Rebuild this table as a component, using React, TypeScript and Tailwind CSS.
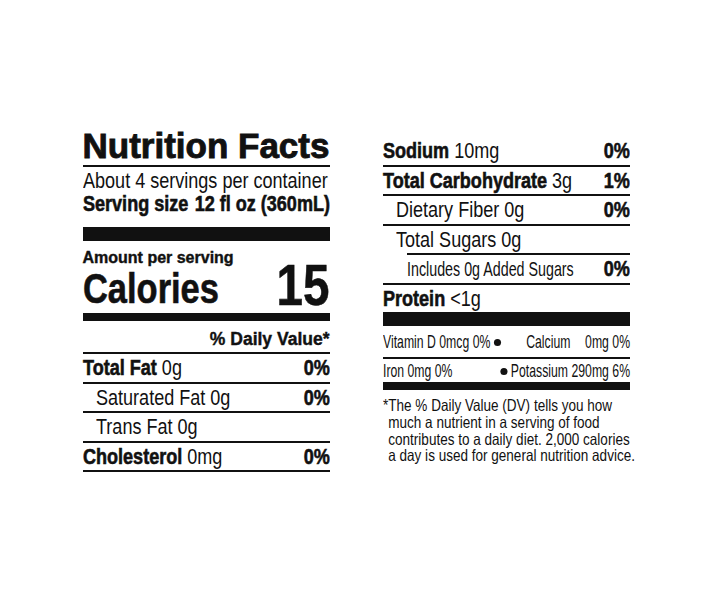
import clsx from 'clsx';

// condensed type = Liberation Sans squeezed horizontally (no narrow face installed)
const sans = "font-['Liberation_Sans',Arial,sans-serif]";
const heavy = '[-webkit-text-stroke:0.6px_#111]';
const squeeze = 'origin-left scale-x-[0.82] w-[301.2px]';

type RowProps = {
  name: string;
  amount?: string;
  dv?: string;
  bold?: boolean;
  indent?: boolean;
  top?: boolean;
  inset?: boolean;
};

function Row({ name, amount, dv, bold = false, indent = false, top = true, inset = false }: RowProps) {
  return (
    <div
      className={clsx(
        'flex items-baseline whitespace-nowrap leading-[27.5px]',
        top && 'border-t-2 border-[#111]',
        inset && 'ml-[24px]',
        indent && 'pl-[13px]'
      )}
    >
      <div className="flex-1 min-w-0 flex">
        <span className={clsx('origin-left', inset ? 'scale-x-[0.68] text-[21px]' : 'scale-x-[0.82] text-[22px]')}>
          {bold ? <span className={clsx('font-bold', heavy)}>{name}</span> : name}
          {amount && <> {amount}</>}
        </span>
      </div>
      {dv && <span className={clsx('origin-right scale-x-[0.82] text-[22px] font-bold', heavy)}>{dv}</span>}
    </div>
  );
}

function Dot() {
  return <span className="inline-block w-[11px] h-[7px] rounded-[50%] bg-[#111] align-[2px]" />;
}

export default function App() {
  return (
    <div className={clsx(sans, 'min-h-[600px] w-[712px] bg-white text-[#111]')}>
      <div className="flex justify-center items-start gap-[53px] pt-[128px]">
        {/* left panel */}
        <div className="w-[247px]">
          <div className="text-[35px] leading-[35px] font-bold whitespace-nowrap [-webkit-text-stroke:0.9px_#111]">
            Nutrition Facts
          </div>
          <div className="mt-[2px] h-[2px] bg-[#111]" />
          <div className={clsx(squeeze, 'mt-[2px] text-[22px] leading-[23px] whitespace-nowrap')}>
            About 4 servings per container
          </div>
          <div className={clsx(squeeze, heavy, 'flex justify-between text-[22px] leading-[23px] font-bold whitespace-nowrap')}>
            <span>Serving size</span>
            <span>12 fl oz (360mL)</span>
          </div>
          <div className="mt-[12px] h-[14px] bg-[#111]" />
          <div className="mt-[9px] flex justify-between items-end">
            <div>
              <div className="text-[16px] leading-[15px] font-bold whitespace-nowrap [-webkit-text-stroke:0.4px_#111]">
                Amount per serving
              </div>
              <div className={clsx(heavy, 'origin-left scale-x-[0.82] text-[42px] leading-[47px] font-bold')}>Calories</div>
            </div>
            <div className={clsx(heavy, 'origin-right scale-x-[0.82] text-[58px] leading-[55px] font-bold')}>15</div>
          </div>
          <div className="mt-[1px] h-[8px] bg-[#111]" />
          <div className="mt-[9px] text-right text-[17.5px] leading-[18px] font-bold [-webkit-text-stroke:0.4px_#111]">
            % Daily Value*
          </div>
          <div className="mt-[4px] border-b-2 border-[#111]">
            <Row name="Total Fat" amount="0g" dv="0%" bold />
            <Row name="Saturated Fat 0g" dv="0%" indent />
            <Row name="Trans Fat 0g" indent />
            <Row name="Cholesterol" amount="0mg" dv="0%" bold />
          </div>
        </div>

        {/* right panel */}
        <div className="w-[247px] mt-[9.4px]">
          <Row name="Sodium" amount="10mg" dv="0%" bold top={false} />
          <Row name="Total Carbohydrate" amount="3g" dv="1%" bold />
          <Row name="Dietary Fiber 0g" dv="0%" indent />
          <Row name="Total Sugars 0g" indent />
          <Row name="Includes 0g Added Sugars" dv="0%" inset />
          <Row name="Protein" amount="<1g" bold />
          <div className="h-[14px] bg-[#111]" />
          <div className="origin-left scale-x-[0.645] w-[383px] flex whitespace-nowrap text-[19px] leading-[31px]">
            <span className="w-[222px]">
              Vitamin D 0mcg 0% <Dot />
            </span>
            <span>Calcium</span>
            <span className="ml-auto">0mg 0%</span>
          </div>
          <div className="h-[2px] bg-[#111]" />
          <div className="origin-left scale-x-[0.645] w-[383px] flex justify-between whitespace-nowrap text-[19px] leading-[23px]">
            <span>Iron 0mg 0%</span>
            <span>
              <Dot /> Potassium 290mg 6%
            </span>
          </div>
          <div className="h-[8px] bg-[#111]" />
          <div className={clsx(squeeze, 'mt-[7px] flex text-[16.5px] leading-[16.6px] whitespace-nowrap')}>
            <span className="w-[9px]">*</span>
            <span>
              The % Daily Value (DV) tells you how
              <br />
              much a nutrient in a serving of food
              <br />
              contributes to a daily diet. 2,000 calories
              <br />
              a day is used for general nutrition advice.
            </span>
          </div>
        </div>
      </div>
    </div>
  );
}
